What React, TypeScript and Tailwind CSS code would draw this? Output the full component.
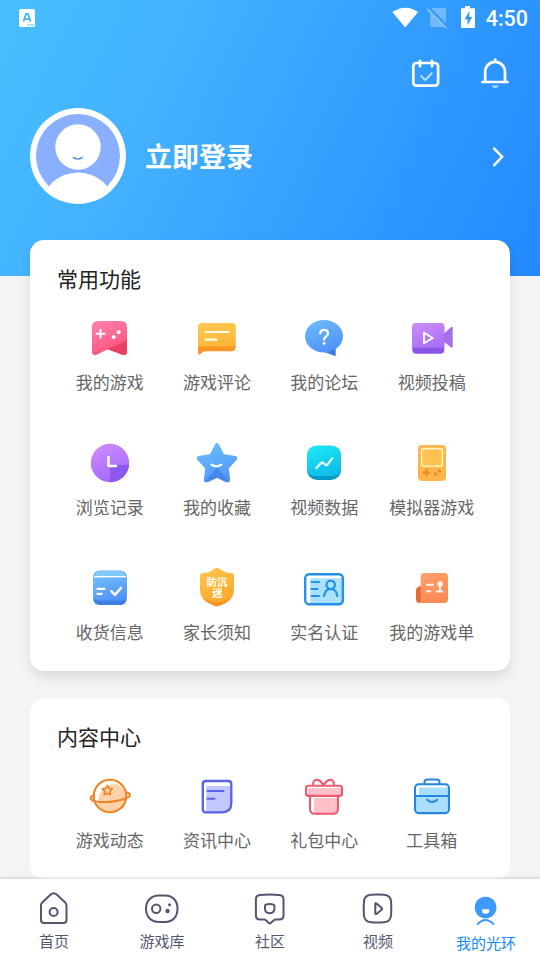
import type { ReactNode } from 'react';

interface Entry {
  label: string;
  icon: ReactNode;
}

function Gradient({ id, from, to }: { id: string; from: string; to: string }) {
  return (
    <linearGradient id={id} x1="0.2" y1="0" x2="0.6" y2="1">
      <stop offset="0" stopColor={from} />
      <stop offset="1" stopColor={to} />
    </linearGradient>
  );
}

const commonFeatures: Entry[] = [
  {
    label: '我的游戏',
    icon: (
      <>
        <Gradient id="game" from="#ff7fae" to="#fb5078" />
        <path d="M6 13q0-6 6-6h23q6 0 6 6v24.500q0 4.500-4.500 3.200L21.700 35.300l-11 5.400Q6 42 6 37.500z" fill="url(#game)" />
        <path d="M41 26.500v11q0 4.500-4.500 3.200L21.700 35.300z" fill="#e94066" />
        <path d="M14.500 15.700v8M10.500 19.700h8" stroke="#fff" strokeWidth="2" />
        <circle cx="32.700" cy="18.300" r="2" fill="#fff" />
        <circle cx="27.700" cy="23" r="2" fill="#fff" />
      </>
    ),
  },
  {
    label: '游戏评论',
    icon: (
      <>
        <Gradient id="comment" from="#ffc94f" to="#fdb63a" />
        <path d="M5 28v11q0 2.500 2.200 1l4.300-2.700H38q4.700 0 4.700-4V28z" fill="#fb9526" />
        <path d="M5 12.500Q5 9 8.500 9h30.700q3.500 0 3.500 3.500V28q0 4.500-4.500 4.500H5z" fill="url(#comment)" />
        <path d="M12.500 18h23M12.500 25.700h11" stroke="#fffbe8" strokeWidth="2.200" />
      </>
    ),
  },
  {
    label: '我的论坛',
    icon: (
      <>
        <Gradient id="forum" from="#6cbcf9" to="#5190fa" />
        <path d="M23 37.500l12.700 4.700V32z" fill="#3c78dc" />
        <ellipse cx="24" cy="22.200" rx="19" ry="16.200" fill="url(#forum)" />
        <path d="M20.200 19.500c.2-2.600 1.800-3.600 3.900-3.600 2.400 0 3.900 1.400 3.900 3.500 0 2.800-3.900 3.200-3.900 6.300" stroke="#fff" strokeWidth="2.200" />
        <circle cx="24.100" cy="29.400" r="1.400" fill="#fff" />
      </>
    ),
  },
  {
    label: '视频投稿',
    icon: (
      <>
        <Gradient id="camera" from="#cb8cfa" to="#a96ff4" />
        <path d="M35 20.500l7.800-7.300q1.900-1.200 1.900.8v18.500q0 2-1.900.8L35 27z" fill="#a56fe8" />
        <rect x="4.300" y="9" width="32" height="30.700" rx="4" fill="#8a55e6" />
        <path d="M4.300 13q0-4 4-4h24q4 0 4 4v20.700h-32z" fill="url(#camera)" />
        <path d="M16 18.800v10.400l8.800-5.200z" stroke="#fff" strokeWidth="1.900" />
      </>
    ),
  },
  {
    label: '浏览记录',
    icon: (
      <>
        <Gradient id="history" from="#cc8bfc" to="#a368fa" />
        <circle cx="24" cy="24" r="19.200" fill="url(#history)" />
        <path d="M24 26h19.100A19.200 19.200 0 0 1 24 43.200z" fill="#8e58f0" />
        <path d="M22.500 18v9h7.500" stroke="#fff" strokeWidth="2.400" />
      </>
    ),
  },
  {
    label: '我的收藏',
    icon: (
      <>
        <Gradient id="star" from="#67bdfc" to="#5396fa" />
        <path
          d="M24 6.500l5.400 10.700 12.600 2-8.600 9.500 1.500 12.400L24 36.200l-10.900 4.900 1.500-12.400L6 19.200l12.600-2z"
          fill="url(#star)"
          stroke="url(#star)"
          strokeWidth="4.600"
        />
        <path d="M24 28.500l11.300 12.700q-1 2.600-3.500 1.600L24 39l-8 3.800q-2.600 1-3.300-1.500z" fill="#3c7ae6" opacity=".6" />
        <path d="M18.600 25.700q5.400 3.200 9.800 0" stroke="#fff" strokeWidth="2.200" />
      </>
    ),
  },
  {
    label: '视频数据',
    icon: (
      <>
        <Gradient id="data" from="#1ee8f6" to="#0cbce8" />
        <rect x="7" y="6.700" width="34" height="34.300" rx="10" fill="#0798ca" />
        <path d="M7 16.700q0-10 10-10h14q10 0 10 10V28q0 9-9 9H16q-9 0-9-9z" fill="url(#data)" />
        <path d="M16.300 29l5.500-5.800 5 3.200 5.400-7" stroke="#e8ffff" strokeWidth="2.300" />
      </>
    ),
  },
  {
    label: '模拟器游戏',
    icon: (
      <>
        <rect x="10" y="6" width="28" height="36" rx="4" fill="#feb64a" />
        <rect x="13.600" y="9.600" width="20.800" height="17.600" rx="2" fill="#ffc24f" stroke="#fff1bd" strokeWidth="1.600" />
        <path d="M18.400 31v5.400M15.700 33.700h5.400" stroke="#ea8a1e" strokeWidth="2.200" />
        <circle cx="31.300" cy="32" r="1.700" fill="#ea8a1e" />
        <circle cx="27.700" cy="35" r="1.700" fill="#ea8a1e" />
      </>
    ),
  },
  {
    label: '收货信息',
    icon: (
      <>
        <Gradient id="parcel" from="#79c4fb" to="#4f94f6" />
        <rect x="7.300" y="6.700" width="33.400" height="34.300" rx="6" fill="#3c7fe0" />
        <path d="M7.300 13.500Q9 6.700 14 6.700h20q5 0 6.700 6.800V30q0 6.500-6 6.500H13.300q-6 0-6-6.500z" fill="url(#parcel)" />
        <path d="M8 12.500Q9.500 6.700 14 6.700h20q4.500 0 6 5.800z" fill="#80c8f6" />
        <path d="M8 12.700h32" stroke="#fff" strokeWidth="1.400" strokeLinecap="butt" />
        <path d="M11.500 24.900h6.800M11.500 29.900h4" stroke="#fff" strokeWidth="2.200" />
        <path d="M25.300 27.200l3.700 3.700 6-7" stroke="#fff" strokeWidth="2.400" />
      </>
    ),
  },
  {
    label: '家长须知',
    icon: (
      <>
        <Gradient id="shield" from="#fec54a" to="#fda629" />
        <path d="M24 4q2 0 3.500 1.400Q32 9 39 9.200q2 0 2 2V26q0 8-8 12.500-8 4.500-9 3.700-1 .8-9-3.700Q7 34 7 26V11.200q0-2 2-2 7-.2 11.500-3.800Q22 4 24 4z" fill="url(#shield)" />
        <path d="M9 33.500Q24 43 39 33.500q-2.500 3.500-7 5.700-7 3.500-8 3-1 .5-8-3-4.500-2.200-7-5.700z" fill="#fb9420" />
        <text textAnchor="middle" fontSize="10.500" fontWeight="700" fill="#fff">
          <tspan x="24" y="22">防沉</tspan>
          <tspan x="24.500" y="33">迷</tspan>
        </text>
      </>
    ),
  },
  {
    label: '实名认证',
    icon: (
      <>
        <path d="M10.300 14.300H43V37q0 3-3 3H10.300z" fill="#ace0ff" />
        <rect x="5.200" y="10.200" width="37.700" height="30" rx="4" stroke="#2490ee" strokeWidth="2.400" />
        <path d="M11.500 18H19M11.500 25h6M11.500 32H19" stroke="#2490ee" strokeWidth="2" />
        <circle cx="30.700" cy="20.800" r="4.200" stroke="#2490ee" strokeWidth="2.200" />
        <path d="M24 32q1-7 6.700-7t6.700 7" stroke="#2490ee" strokeWidth="2.200" />
      </>
    ),
  },
  {
    label: '我的游戏单',
    icon: (
      <>
        <Gradient id="list" from="#ffa068" to="#fa8858" />
        <path d="M14 22q-6 0-6 5v8q0 4 4 4h6z" fill="#e26b38" />
        <path d="M12.700 13q0-4 4-4H36q4 0 4 4v22q0 4-4 4H11q1.700-1.500 1.700-4z" fill="url(#list)" />
        <path d="M19 20.700h6M19 27.300h3M28.500 27.500h6M32 20v6" stroke="#fff5ea" strokeWidth="2.100" />
        <circle cx="32.200" cy="20" r="2.700" fill="#fff5ea" />
      </>
    ),
  },
];

const contentCenter: Entry[] = [
  {
    label: '游戏动态',
    icon: (
      <>
        <path d="M40.300 23a16.300 16.300 0 0 1-27 13.500C9.500 25 16 12 29 12q8 1 11.300 11z" fill="#fdd2a8" />
        <circle cx="24" cy="24" r="16.300" stroke="#ee8428" strokeWidth="2.100" />
        <path d="M7.700 24Q4.500 24 4.700 26.500q.2 2 4 2.700c9 1.700 20 .8 30.300-2.400q5-1.500 5-3.500 0-2-3.500-3" stroke="#ee8428" strokeWidth="2" />
        <path d="M21.300 13.400l1.600 3 3.400.5-2.400 2.500.5 3.400-3.100-1.500-3.100 1.500.5-3.400-2.400-2.500 3.400-.5z" stroke="#ee8428" strokeWidth="1.600" />
      </>
    ),
  },
  {
    label: '资讯中心',
    icon: (
      <>
        <path d="M13.300 14H38v17q0 9-9 9H13.300z" fill="#c2c8ff" />
        <path d="M9.800 12q0-3 3-3h22.500q3 0 3 3v19q0 9.300-9.300 9.300H12.800q-3 0-3-3z" stroke="#5b62e4" strokeWidth="2.300" />
        <path d="M14.500 19h16M14.500 26.700h7" stroke="#5b62e4" strokeWidth="2" />
      </>
    ),
  },
  {
    label: '礼包中心',
    icon: (
      <>
        <path d="M8 16h33v8H8zM14 26h24v12q0 3-3 3H14z" fill="#ffc1c9" />
        <rect x="6" y="13.700" width="36" height="10.200" rx="2.500" stroke="#ec5a70" strokeWidth="2.100" />
        <path d="M10 24.500v12.200q0 5 5 5h18q5 0 5-5V24.500" stroke="#ec5a70" strokeWidth="2.100" />
        <path d="M13 13q0-5.700 4.500-5.200 3.500 1 6 5.400 2.500-4.400 6-5.400Q34 7.300 34 13" stroke="#ec5a70" strokeWidth="2" />
      </>
    ),
  },
  {
    label: '工具箱',
    icon: (
      <>
        <path d="M11 15.500h29V24H11zM8 24h32.500v13q0 3-3 3H11q-3 0-3-3z" fill="#aadeff" />
        <rect x="7" y="12.300" width="34" height="28.800" rx="3.800" stroke="#2587dc" strokeWidth="2.100" />
        <path d="M7 24h34M16.500 12v-2q0-2.500 2.500-2.500h10q2.500 0 2.500 2.500v2M19.200 27.700q5 4.500 10 0" stroke="#2587dc" strokeWidth="2" />
      </>
    ),
  },
];

const tabs: Entry[] = [
  {
    label: '首页',
    icon: (
      <>
        <path d="M7 17.500q0-1.800 1.200-3l8.500-8q3-2.500 6 0l8.500 8q1.300 1.200 1.300 3V32q0 3-3 3H10q-3 0-3-3z" />
        <circle cx="19.600" cy="24" r="4" />
      </>
    ),
  },
  {
    label: '游戏库',
    icon: (
      <>
        <path d="M17 7.500h6C31 7.500 35.500 13 35.500 20.700S31 34 23 34h-6C9 34 4 28.400 4 20.700S9 7.500 17 7.500z" />
        <circle cx="14.200" cy="20.700" r="4.200" />
        <circle cx="27.600" cy="16.700" r="1.500" fill="#525670" stroke="none" />
        <circle cx="25.500" cy="23" r="2.200" fill="#525670" stroke="none" />
      </>
    ),
  },
  {
    label: '社区',
    icon: (
      <>
        <path d="M10 7q9.600-1.200 19.200 0 4.300.5 4.300 4v16.500q0 4-4 4h-4q-1 0-1.700.8l-3 2.700q-1 .8-2 0l-2.800-2.700q-.7-.8-1.700-.8h-4.400q-4 0-4-4V11q0-3.500 4.100-4z" />
        <path d="M15.600 16.600q4-1 8 0 .8.200.8 1v3q0 4.600-4.700 4.600t-4.700-4.600v-3q0-.8.600-1z" />
      </>
    ),
  },
  {
    label: '视频',
    icon: (
      <>
        <path d="M13 6.800q6.500-.6 13 0 6.700.6 7.100 7.200.4 6.500 0 13-.4 6.700-7.100 7.300-6.500.5-13 0-6.700-.6-7.100-7.300-.4-6.500 0-13Q6.300 7.400 13 6.800z" />
        <path d="M17.300 15.800v9.600q.1 1.200 1.200.5l5-4.200q1-.9 0-1.900l-5-4.300q-1.200-.8-1.200.3z" />
      </>
    ),
  },
  {
    label: '我的光环',
    icon: (
      <>
        <circle cx="19.600" cy="19.500" r="10.800" fill="#3e99fd" stroke="none" />
        <path d="M17 21.300h5.400q1 0 1 1 0 3.500-3.700 3.500T16 22.300q0-1 1-1z" fill="#fff" stroke="none" />
        <path d="M11.800 36q7.800-8 15.600 0" stroke="#3e99fd" />
      </>
    ),
  },
];

function StatusBar() {
  return (
    <div className="flex h-9 items-center justify-between pl-[19px] pr-3">
      <svg viewBox="0 0 16 18" className="h-[18px] w-4">
        <rect width="16" height="18" rx="1.500" fill="#fff" />
        <path d="M4.500 12.500L7 5h2l2.500 7.500M5.500 10.200h5" fill="none" stroke="#43b6fe" strokeWidth="1.800" />
        <path d="M8.500 15.900h6.500" stroke="#43b6fe" strokeWidth="1.400" strokeDasharray="1.500 1" />
      </svg>
      <div className="flex items-center">
        <svg viewBox="0 0 90 26" className="mr-[4px] h-[26px] w-[90px]">
          <path d="M.3 7q12.900-8.600 25.800 0L13.200 22.500z" fill="#fff" />
          <path d="M40.500 3h12q1.500 0 1.500 1.500v16.500q0 1-1.500 1H39.500q-1.500 0-1.500-1V6.500z" fill="#70b9ff" />
          <path d="M37 3.200l19 19" stroke="#2e98ff" strokeWidth="2.500" />
          <path d="M35.500 4l19 19.200" stroke="#82c2ff" strokeWidth="1.800" />
          <path d="M73 1h5v2.300h5V23H69V3.300h4z" fill="#fff" />
          <path d="M77.500 6l-5 8.200h3v6l4.700-8.200h-3z" fill="#2e98ff" />
        </svg>
        <span className="pt-0.5 font-[Roboto] text-[21.500px] leading-[34px] font-medium">4:50</span>
      </div>
    </div>
  );
}

function Header() {
  return (
    <header className="h-[276px] bg-[linear-gradient(115deg,#47bfff_0%,#43b1ff_30%,#339dff_64%,#2389ff_100%)] text-white">
      <StatusBar />
      <div className="flex h-[72px] items-center justify-end gap-[38px] pr-[28px]">
        <svg viewBox="0 0 32 36" className="h-9 w-8" fill="none" stroke="#fff" strokeWidth="2.700" strokeLinecap="round" strokeLinejoin="round">
          <rect x="5.300" y="9" width="24.800" height="22.600" rx="3" />
          <path d="M12 6.800v5.500M24 6.800v5.500" />
          <path d="M12.500 21.500l4.700 4.500 7.200-7.200" stroke="#b5dcff" strokeWidth="2.200" strokeLinecap="butt" />
        </svg>
        <svg viewBox="0 0 34 36" className="h-9 w-[34px]" fill="none" stroke="#fff" strokeWidth="2.700" strokeLinecap="round">
          <path d="M4.400 28h25.200M7.200 28V17.800a9.900 9.900 0 0 1 19.800 0V28M17.200 5.700v2" />
          <path d="M13.200 31.500h8q-4 5-8 0z" fill="#b8dcff" stroke="none" />
        </svg>
      </div>
      <div className="flex h-24 items-center pl-[30px] pr-[34px]">
        <svg viewBox="0 0 96 96" className="size-24">
          <clipPath id="face">
            <circle cx="48" cy="48" r="45" />
          </clipPath>
          <circle cx="48" cy="48" r="48" fill="#fff" />
          <circle cx="48" cy="48" r="42" fill="#8aafff" />
          <g clipPath="url(#face)">
            <circle cx="48" cy="39" r="22.700" fill="#fff" />
            <ellipse cx="48" cy="98" rx="36" ry="33.500" fill="#fff" />
          </g>
          <path d="M43.500 49.500q4.300 3 8.600 0" fill="none" stroke="#5b97dc" strokeWidth="1.600" strokeLinecap="round" />
        </svg>
        <span className="ml-[19px] text-[27px] font-bold">立即登录</span>
        <svg viewBox="0 0 16 24" className="ml-auto h-6 w-4" fill="none" stroke="#fff" strokeWidth="2.500">
          <path d="M3.500 3.800l8.600 9-8.600 9" />
        </svg>
      </div>
    </header>
  );
}

function FeatureGrid({ items }: { items: Entry[] }) {
  return (
    <div className="grid auto-rows-[125px] grid-cols-4 pr-[24.7px] pl-[26px]">
      {items.map((item) => (
        <div key={item.label} className="flex flex-col items-center">
          <svg viewBox="0 0 48 48" className="size-12" fill="none" strokeLinecap="round" strokeLinejoin="round">
            {item.icon}
          </svg>
          <span className="mt-[7px] text-[17px] leading-[26px] whitespace-nowrap text-[#666]">{item.label}</span>
        </div>
      ))}
    </div>
  );
}

function TabBar() {
  return (
    <nav className="relative grid h-[81px] shrink-0 grid-cols-5 bg-white shadow-[0_-1px_3px_rgba(0,0,0,0.16)]">
      {tabs.map((tab, i) => {
        const active = i === tabs.length - 1;
        return (
          <div key={tab.label} className="flex flex-col items-center pt-[9px]">
            <svg
              viewBox="0 0 40 40"
              className="size-10 shrink-0"
              fill="none"
              stroke="#525670"
              strokeWidth="2"
              strokeLinecap="round"
              strokeLinejoin="round"
            >
              {tab.icon}
            </svg>
            <span className={active ? 'mt-[4px] text-[15px] leading-[22px] text-[#1687f5]' : 'mt-[2px] text-[15px] leading-[22px] text-[#525670]'}>
              {tab.label}
            </span>
          </div>
        );
      })}
    </nav>
  );
}

export default function App() {
  return (
    <div className="flex h-[960px] w-[540px] flex-col overflow-hidden bg-[#f4f4f4] font-['Noto_Sans_CJK_SC',sans-serif]">
      <main className="h-[879px] shrink-0 overflow-hidden">
        <Header />
        <section className="relative mx-[30px] -mt-9 h-[431px] rounded-[14px] bg-white shadow-[0_6px_12px_rgba(0,0,0,0.1)]">
          <h2 className="h-[74px] pt-[22px] pl-[27px] text-[21px] leading-8 text-[#222]">常用功能</h2>
          <FeatureGrid items={commonFeatures} />
        </section>
        <section className="mx-[30px] mt-[27px] h-[181px] rounded-[14px] bg-white">
          <h2 className="h-[74px] pt-[22px] pl-[27px] text-[21px] leading-8 text-[#222]">内容中心</h2>
          <FeatureGrid items={contentCenter} />
        </section>
      </main>
      <TabBar />
    </div>
  );
}
